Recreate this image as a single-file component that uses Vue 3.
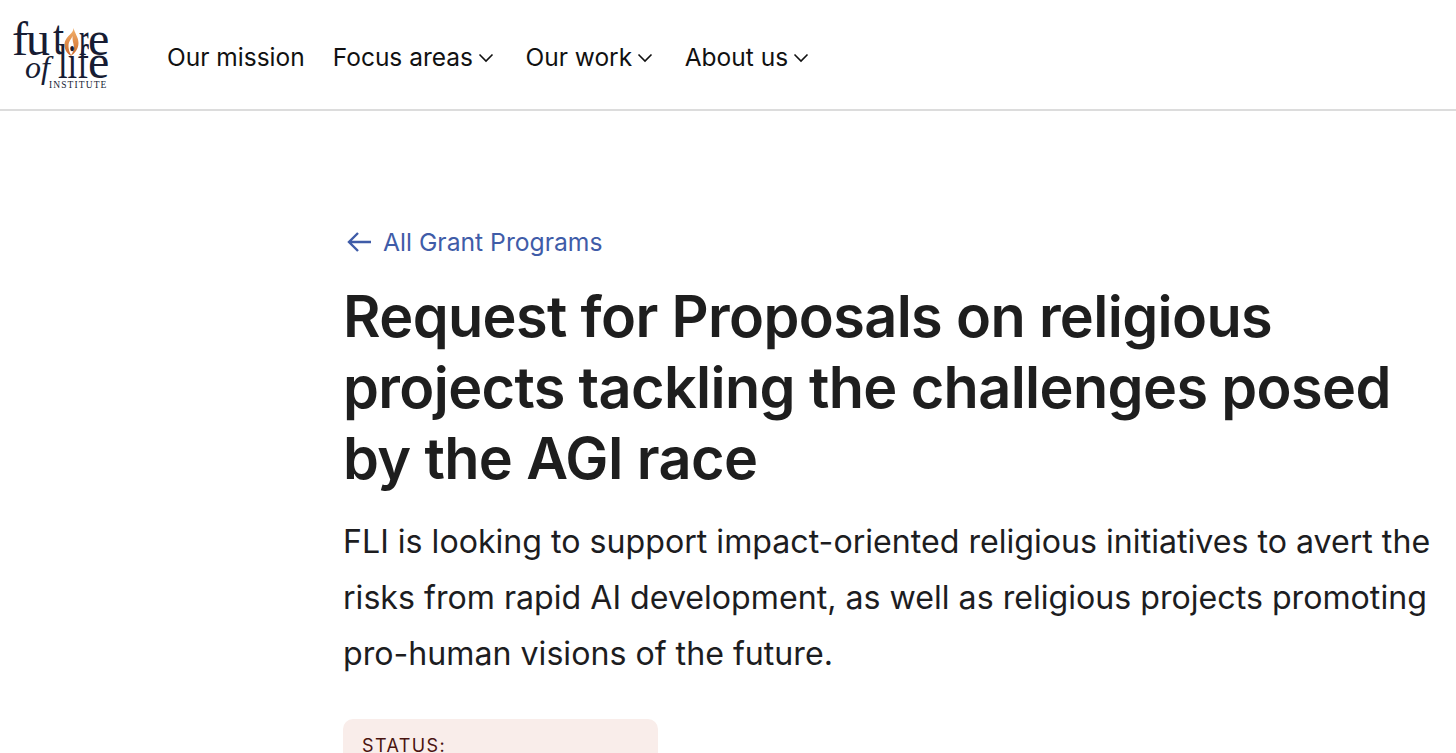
<script setup>
const navItems = [
  { label: "Our mission", caret: false },
  { label: "Focus areas", caret: true },
  { label: "Our work", caret: true },
  { label: "About us", caret: true },
];
</script>

<template>
  <div class="page">
    <header class="topbar">
      <div class="logo">
        <span class="lg fu">fu</span>
        <span class="lg t1">t</span>
        <span class="lg r1">r</span>
        <span class="lg e1">e</span>
        <svg class="flame" viewBox="0 0 14 28" width="15" height="28">
          <defs>
            <linearGradient id="fl" x1="0" y1="0" x2="0" y2="1">
              <stop offset="0" stop-color="#f3b26b" />
              <stop offset="1" stop-color="#cf6a2c" />
            </linearGradient>
          </defs>
          <path d="M9 0c1 5 5 9 5 15 0 6-4 11-8 13 3-4 4-8 3-12-1-3-1-6-1-8-1 3-4 5-4 10 0 3 1 7 3 10-4-2-7-6-7-11 0-5 3-8 5-10 2-2 4-4 4-7z" fill="url(#fl)" />
        </svg>
        <span class="lg of">of</span>
        <span class="lg lif">lif</span>
        <span class="lg e2">e</span>
        <span class="lg inst">INSTITUTE</span>
      </div>
      <nav class="nav">
        <a v-for="item in navItems" :key="item.label" class="nav-item">
          {{ item.label }}
          <svg v-if="item.caret" class="caret" viewBox="0 0 16 10" width="16" height="10">
            <path d="M1.5 1.5 8 8l6.5-6.5" fill="none" stroke="#111" stroke-width="1.6" />
          </svg>
        </a>
      </nav>
    </header>

    <main class="content">
      <a class="back">
        <svg viewBox="0 0 26 24" width="26" height="24">
          <path d="M25 12H3M12 3l-9 9 9 9" fill="none" stroke="#3f5ca8" stroke-width="2.4" />
        </svg>
        All Grant Programs
      </a>
      <h1>Request for Proposals on religious projects tackling the challenges posed by the AGI race</h1>
      <p class="lead">FLI is looking to support impact-oriented religious initiatives to avert the risks from rapid AI development, as well as religious projects promoting pro-human visions of the future.</p>
      <div class="status">
        <span>STATUS:</span>
      </div>
    </main>
  </div>
</template>

<style scoped>
.page {
  height: 753px;
  overflow: hidden;
  background: #fff;
  font-family: Inter, "Liberation Sans", sans-serif;
  color: #1d1d1f;
}
.topbar {
  display: flex;
  align-items: center;
  height: 109px;
  border-bottom: 2px solid #dcdcdc;
  padding-left: 12px;
}
.logo {
  position: relative;
  flex: none;
  width: 100px;
  height: 80px;
  margin-top: -5px;
  color: #171c33;
  font-family: "Liberation Serif", serif;
}
.lg {
  position: absolute;
  line-height: 1;
  transform-origin: left center;
}
.fu { left: 0; top: 3px; font-size: 48px; letter-spacing: -2px; }
.t1 { left: 41px; top: 0; font-size: 50px; transform: scaleX(0.8); }
.r1 { left: 67px; top: 3px; font-size: 48px; transform: scaleX(0.6); }
.e1 { left: 76px; top: 3px; font-size: 48px; }
.of { left: 13px; top: 39px; font-size: 32px; font-style: italic; }
.lif { left: 46px; top: 26px; font-size: 48px; transform: scaleX(0.72); }
.e2 { left: 76px; top: 26px; font-size: 48px; }
.inst { left: 37px; top: 69px; font-size: 9.5px; letter-spacing: 1.1px; }
.flame { position: absolute; left: 52px; top: 16px; }
.nav {
  display: flex;
  align-items: center;
  gap: 28px;
  margin-left: 55px;
  margin-top: 4px;
}
.nav-item {
  display: flex;
  align-items: center;
  gap: 5px;
  font-size: 24.5px;
  white-space: nowrap;
  color: #111;
}
.caret { margin-top: 3px; margin-right: 3.5px; }
.content {
  padding: 113px 0 0 343px;
  width: 1440px;
  box-sizing: border-box;
}
.back {
  display: flex;
  align-items: center;
  gap: 11px;
  font-size: 24.7px;
  color: #3f5ca8;
  height: 36px;
}
.back svg { margin-left: 3px; }
h1 {
  margin: 21px 0 0;
  font-size: 57.6px;
  line-height: 71px;
  font-weight: 575;
  letter-spacing: -0.63px;
  color: #1e1e1e;
}
.lead {
  margin: 20px 0 0;
  font-size: 32.15px;
  line-height: 56px;
  font-weight: 400;
}
.status {
  margin-top: 37px;
  width: 315px;
  height: 120px;
  border-radius: 10px;
  background: #f9edea;
  padding: 16px 19px;
  box-sizing: border-box;
  font-size: 18px;
  letter-spacing: 1.4px;
  color: #4a1410;
}
</style>

<style>
html, body { margin: 0; overflow: hidden; }
</style>
